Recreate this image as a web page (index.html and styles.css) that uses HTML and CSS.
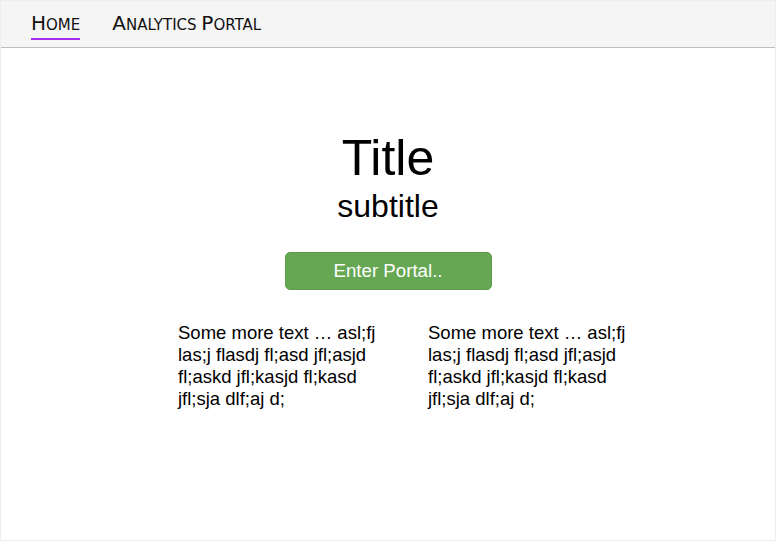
FILE: index.html
```html
<!DOCTYPE html>
<html>
<head>
<meta charset="utf-8">
<link rel="stylesheet" href="styles.css">
</head>
<body>
<div class="page">
  <nav class="nav">
    <a class="nav-link active"><span class="cap">H</span><span class="sc">ome</span></a>
    <a class="nav-link"><span class="cap">A</span><span class="sc">nalytics </span><span class="cap">P</span><span class="sc">ortal</span></a>
  </nav>
  <main class="main">
    <h1 class="title">Title</h1>
    <h2 class="subtitle">subtitle</h2>
    <button class="enter">Enter Portal..</button>
    <div class="cols">
      <p class="col">Some more text … asl;fj las;j flasdj fl;asd jfl;asjd fl;askd jfl;kasjd fl;kasd jfl;sja dlf;aj d;</p>
      <p class="col">Some more text … asl;fj las;j flasdj fl;asd jfl;asjd fl;askd jfl;kasjd fl;kasd jfl;sja dlf;aj d;</p>
    </div>
  </main>
</div>
</body>
</html>
```
FILE: styles.css
```css
html, body {
  margin: 0;
  padding: 0;
  background: #ffffff;
}
.page {
  width: 776px;
  height: 541px;
  box-sizing: border-box;
  border-left: 1px solid #eeeeee;
  border-right: 1px solid #eeeeee;
  border-bottom: 1px solid #eeeeee;
  display: flex;
  flex-direction: column;
  font-family: "Liberation Sans", Arial, sans-serif;
}
.nav {
  height: 48px;
  box-sizing: border-box;
  background: #f5f5f5;
  border-top: 1px solid #eeeeee;
  border-bottom: 1px solid #bdbdbd;
  display: flex;
  align-items: flex-start;
  padding-left: 30px;
  gap: 32px;
}
.nav-link {
  font-family: "DejaVu Sans", Verdana, sans-serif;
  color: #111111;
  padding-top: 11px;
  padding-bottom: 1px;
  line-height: 23px;
  border-bottom: 2px solid transparent;
  white-space: pre;
}
.cap {
  font-size: 20px;
}
.sc {
  font-size: 15px;
  text-transform: uppercase;
}
.nav-link.active {
  border-bottom-color: #a52df0;
}
.main {
  display: flex;
  flex-direction: column;
  align-items: center;
}
.title {
  margin: 84px 0 0 0;
  font-size: 50px;
  font-weight: normal;
  line-height: 52px;
  color: #000;
}
.subtitle {
  margin: 3px 0 0 0;
  font-size: 32px;
  font-weight: normal;
  line-height: 38px;
  color: #000;
}
.enter {
  margin-top: 27px;
  width: 207px;
  height: 38px;
  background: #65a752;
  border: 1px solid #5c9c4a;
  border-radius: 5px;
  color: #ffffff;
  font-family: "Liberation Sans", Arial, sans-serif;
  font-size: 18.7px;
}
.cols {
  align-self: flex-start;
  margin: 32px 0 0 177px;
  display: flex;
  gap: 45px;
}
.col {
  margin: 0;
  width: 205px;
  font-size: 18.5px;
  line-height: 22px;
  color: #000;
}
```
